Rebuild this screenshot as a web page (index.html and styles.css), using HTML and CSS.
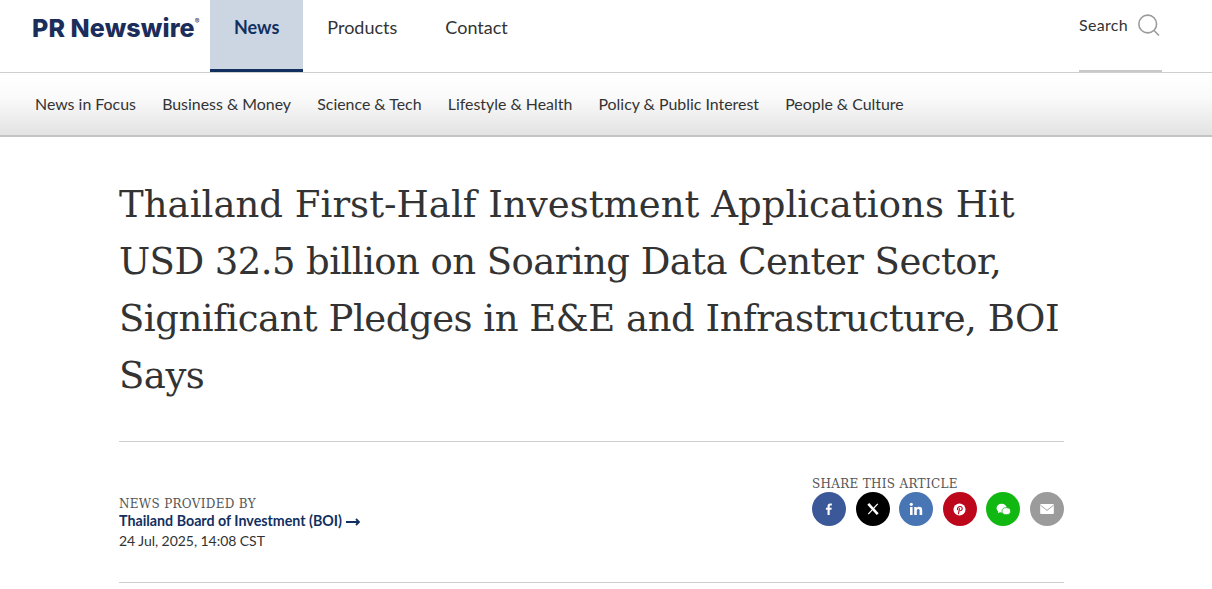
FILE: index.html
```html
<!DOCTYPE html>
<html lang="en">
<head>
<meta charset="utf-8">
<title>PR Newswire</title>
<link rel="stylesheet" href="styles.css">
</head>
<body>
<header class="topbar">
  <a class="logo">PR Newswire<sup class="reg">®</sup></a>
  <nav class="mainnav">
    <a class="mainlink active">News</a>
    <a class="mainlink">Products</a>
    <a class="mainlink">Contact</a>
  </nav>
  <div class="search">
    <span>Search</span>
    <svg class="searchicon" width="22" height="22" viewBox="0 0 22 22" fill="none" stroke="#9b9b9b" stroke-width="1.6"><circle cx="9.7" cy="10" r="8.900"/><path d="M16 16.500l5 5"/></svg>
  </div>
</header>
<nav class="subnav">
  <a>News in Focus</a>
  <a>Business &amp; Money</a>
  <a>Science &amp; Tech</a>
  <a>Lifestyle &amp; Health</a>
  <a>Policy &amp; Public Interest</a>
  <a>People &amp; Culture</a>
</nav>
<main class="article">
  <h1><span class="l1">Thailand First-Half Investment Applications Hit</span> <span class="l2">USD 32.5 billion on Soaring Data Center Sector,</span> <span class="l3">Significant Pledges in E&amp;E and Infrastructure, BOI</span> <span class="l3">Says</span></h1>
  <div class="meta">
    <div class="provider">
      <div class="label">NEWS PROVIDED BY</div>
      <a class="source">Thailand Board of Investment (BOI) <svg class="arrow" width="14" height="8" viewBox="0 0 14 8" fill="none" stroke="#12305f" stroke-width="1.8"><path d="M0 4h12.500M10 1l3 3-3 3"/></svg></a>
      <div class="date">24 Jul, 2025, 14:08 CST</div>
    </div>
    <div class="share">
      <div class="label">SHARE THIS ARTICLE</div>
      <div class="icons">
        <a class="ic fb"><svg width="12" height="12" viewBox="0 0 14 14" fill="#fff"><path d="M5.300 14V7.800H3.400V5.400h1.900V3.800C5.300 1.700 6.500.600 8.400.600c.9 0 1.700.100 1.900.100v2.200H9c-1 0-1.200.5-1.200 1.200v1.300h2.400l-.3 2.400H7.800V14z"/></svg></a>
        <a class="ic xx"><svg width="12" height="12" viewBox="0 0 14 14" fill="none" stroke="#fff"><path d="M1.500 1l11 12" stroke-width="3"/><path d="M12.500 1L1.500 13" stroke-width="1.400"/></svg></a>
        <a class="ic li"><svg width="14" height="14" viewBox="0 0 14 14" fill="#fff"><circle cx="2.300" cy="2.300" r="1.600"/><path d="M1 5h2.600v8H1zM5.200 5h2.500v1.100c.5-.8 1.400-1.300 2.500-1.300 2.200 0 3 1.400 3 3.600V13h-2.600V8.900c0-1-.3-1.800-1.300-1.800s-1.500.8-1.500 1.800V13H5.200z"/></svg></a>
        <a class="ic pi"><svg width="13" height="13" viewBox="0 0 14 14"><circle cx="7" cy="7" r="6.500" fill="#fff"/><path d="M7 5.500L5.800 12M5 7.600C4.300 5.200 6.200 3.800 7.600 3.800c1.700 0 2.500 1.200 2.300 2.500-.2 1.400-1.400 2.400-2.600 1.900" fill="none" stroke="#bd081c" stroke-width="1.200"/></svg></a>
        <a class="ic wc"><svg width="15" height="13" viewBox="0 0 16 14" fill="#fff"><ellipse cx="6" cy="5.500" rx="5.500" ry="4.600"/><path d="M2.500 8.500L2 11l2.800-1.500z"/><ellipse cx="11" cy="8.800" rx="4.600" ry="3.800" stroke="#12b812" stroke-width=".8"/></svg></a>
        <a class="ic em"><svg width="14" height="10" viewBox="0 0 15 11"><rect width="15" height="11" rx="1.200" fill="#fff"/><path d="M.5 1.500L7.500 7l7-5.500" fill="none" stroke="#9b9b9b" stroke-width="1"/></svg></a>
      </div>
    </div>
  </div>
</main>
</body>
</html>
```
FILE: styles.css
```css
* { box-sizing: border-box; }
html, body { margin: 0; padding: 0; height: 589px; overflow: hidden; background: #fff; }
body { font-family: "Lato", "Liberation Sans", sans-serif; color: #333; }
a { color: inherit; text-decoration: none; }

.topbar { display: flex; height: 73px; padding-left: 32px; border-bottom: 1px solid #cfcfcf; }
.logo { width: 178px; padding-top: 13px; font: 800 25px/30px "Inter", "Liberation Sans", sans-serif; color: #1b2d5b; letter-spacing: .1px; white-space: nowrap; }
.reg { font-size: 7px; line-height: 0; vertical-align: 13px; font-weight: 400; letter-spacing: 0; }
.mainnav { display: flex; }
.mainlink { height: 72px; padding: 17px 24px 0; font-size: 18px; line-height: 20px; }
.mainlink.active { background: #ccd5e2; border-bottom: 3px solid #12305f; color: #12305f; font-weight: 700; }
.search { display: flex; align-items: flex-start; gap: 10px; margin-left: auto; margin-right: 50px; width: 83px; height: 72px; padding-top: 14px; border-bottom: 2px solid #c8c8c8; font-size: 16px; line-height: 22px; letter-spacing: .3px; }
.searchicon { flex: none; }

.subnav { display: flex; gap: 26.2px; height: 64px; padding: 21px 35px 0; background: linear-gradient(#fff 0, #fafafa 40%, #e3e3e3 100%); border-bottom: 2px solid #c4c4c4; font-size: 15.9px; line-height: 20px; }

.article { width: 945px; margin-left: 119px; }
h1 { margin: 39px 0 0; padding-bottom: 37px; border-bottom: 1px solid #cfcfcf; font: 400 37px/57px "DejaVu Serif", serif; color: #333; }
h1 span { display: block; white-space: nowrap; }
.l1 { letter-spacing: .03px; }
.l2 { letter-spacing: -.56px; }
.l3 { letter-spacing: -.48px; }
.meta { display: flex; justify-content: space-between; height: 141px; border-bottom: 1px solid #cfcfcf; }
.label { font: 400 12px/17px "DejaVu Serif", serif; letter-spacing: .3px; color: #555; }
.provider { padding-top: 54px; }
.source { display: block; margin-top: -2px; font-size: 14.25px; font-weight: 700; line-height: 19px; color: #12305f; }
.arrow { margin-left: 1px; }
.date { font-size: 14px; line-height: 21px; letter-spacing: -.05px; }
.share { width: 252px; padding-top: 34px; }
.icons { display: flex; justify-content: space-between; margin-top: -1px; }
.ic { display: flex; align-items: center; justify-content: center; width: 34px; height: 34px; border-radius: 50%; }
.fb { background: #3b5998; }
.xx { background: #000; }
.li { background: #4875b4; }
.pi { background: #bd081c; }
.wc { background: #12b812; }
.em { background: #9b9b9b; }
```
